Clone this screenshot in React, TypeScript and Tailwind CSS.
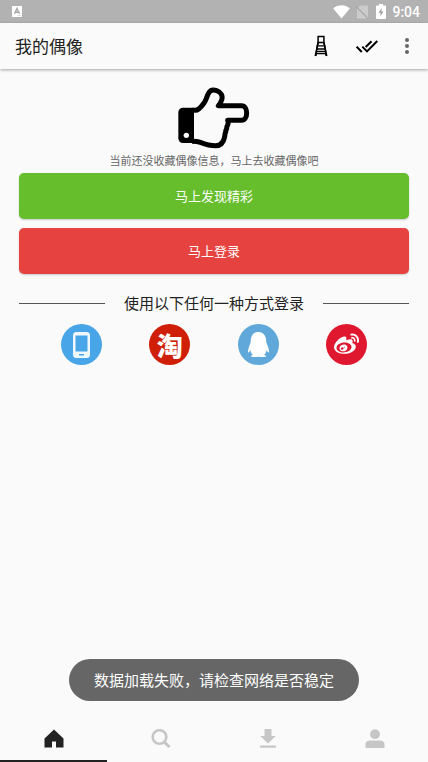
// Favourites ("我的偶像") screen: empty state, third-party sign-in and bottom tabs.
import React from "react";
import { FaQq, FaWeibo } from "react-icons/fa";

const FONT = "font-['Noto_Sans_CJK_SC',sans-serif]";

function StatusBar(): React.ReactElement {
  return (
    <div className="flex h-[23px] items-center bg-[#b2b2b2] pr-2 pl-3 text-white">
      <svg viewBox="0 0 10 11" className="h-[11px] w-[10px]" aria-hidden="true">
        <rect width="10" height="11" rx=".5" fill="#fff" />
        <path d="M2.500 7.800 5 2.500 7.500 7.800M3.400 6.200h3.200" fill="none" stroke="#a8a8a8" strokeWidth="1.400" />
        <path d="M5.500 9.600h3" stroke="#a8a8a8" strokeWidth=".5" />
      </svg>
      <span className="flex-1" />
      <svg viewBox="0 0 17 14" className="h-[14px] w-[17px]" aria-hidden="true">
        <path d="M.2 3.600C5-.8 12-.8 16.800 3.600L8.500 13.500Z" fill="#fff" />
      </svg>
      <svg viewBox="0 0 12 14" className="ml-[6px] h-[14px] w-[12px]" aria-hidden="true">
        <path d="M4 .5h7a1 1 0 0 1 1 1v12H1V4Z" fill="#cbcbcb" />
        <path d="M0 1.500 12 13.500" stroke="#a6a6a6" strokeWidth="1.200" />
      </svg>
      <svg viewBox="0 0 10 15" className="ml-2 h-[15px] w-[10px]" aria-hidden="true">
        <path d="M3 0h4v1.500h2a1 1 0 0 1 1 1V14a1 1 0 0 1-1 1H1a1 1 0 0 1-1-1V2.500a1 1 0 0 1 1-1h2Z" fill="#fff" />
        <path d="M5.800 4 2.500 8.800h2.200L4.200 12.500 7.500 7.600H5.300Z" fill="#9c9c9c" />
      </svg>
      <span className="ml-[6px] font-[Roboto,sans-serif] text-[14px] leading-none font-medium">9:04</span>
    </div>
  );
}

function AppBar(): React.ReactElement {
  return (
    <header className="z-10 flex h-[46px] items-center bg-[#fafafa] pr-1 pl-[15px] shadow-[0_1px_3px_rgba(0,0,0,0.35)]">
      <h1 className="flex-1 text-[17px] leading-6 text-[#222]">我的偶像</h1>
      <button type="button" aria-label="排行" className="grid h-full w-[46px] place-items-center">
        <svg viewBox="0 0 14 22" className="h-[22px] w-[14px]" fill="none" stroke="#000" aria-hidden="true">
          <path d="M3.500 1.600h7M4.100 1v7.500L1.200 21M9.900 1v7.500L12.800 21" strokeWidth="1.500" />
          <path d="M3.500 7.500h7M2.800 10.800h8.400M2.400 14h9.200M2 16.500h10M2 18.600h10" strokeWidth="1.300" />
          <path d="M3.800 8 2.600 14l-.6 7M10.200 8l1.200 6 .6 7" strokeWidth="1.300" />
        </svg>
      </button>
      <button type="button" aria-label="全选" className="grid h-full w-[46px] place-items-center">
        <svg viewBox="0 0 22 13" className="h-[13px] w-[22px]" fill="none" stroke="#000" strokeWidth="2" aria-hidden="true">
          <path d="M.6 6.600 5.800 12M6.300 6.600l4.700 4.800L21.300 1M9.700 7 15.500 1.200" />
        </svg>
      </button>
      <button type="button" aria-label="更多" className="grid h-full w-[34px] place-items-center">
        <svg viewBox="0 0 4 16" className="h-4 w-1" fill="#666" aria-hidden="true">
          <circle cx="2" cy="2" r="2" />
          <circle cx="2" cy="8" r="2" />
          <circle cx="2" cy="14" r="2" />
        </svg>
      </button>
    </header>
  );
}

function PointingHand(): React.ReactElement {
  return (
    <svg viewBox="54 21 216 186" className="h-[62px] w-[72px]" aria-hidden="true">
      <path d="M69 83h33v106H69a14 14 0 0 1-14-14V97a14 14 0 0 1 14-14Z" />
      <circle cx="79" cy="166" r="8" fill="#fafafa" />
      <path
        d="M98 91h8c9 0 17-9 26-22 7-9 8-20 14-30 5-9 14-11 24-7 14 5 19 16 15 28-2 6-4 11-10 17h70c9 0 15 10 15 22s-6 22-15 22h-42c2 5 2 9 0 14-3 4-3 7-3 11-3 4-3 7-3 11-3 4-2 8-3 13-3 16-11 27-27 27-16 0-33-5-46-10-8-3-17-3-25-3"
        fill="none"
        stroke="#000"
        strokeWidth="15"
        strokeLinejoin="round"
      />
    </svg>
  );
}

function PhoneGlyph(): React.ReactElement {
  return (
    <svg viewBox="0 0 17 26" className="h-[26px] w-[17px]" aria-hidden="true">
      <path
        fillRule="evenodd"
        fill="#fff"
        fillOpacity=".92"
        d="M3.500 0h10A3.500 3.500 0 0 1 17 3.500v19a3.500 3.500 0 0 1-3.500 3.500h-10A3.500 3.500 0 0 1 0 22.500v-19A3.500 3.500 0 0 1 3.500 0ZM2.500 3.500v16h12v-16ZM6 22v1.500h5V22Z"
      />
    </svg>
  );
}

const LOGINS = [
  { name: "手机登录", bg: "bg-[#48a6e8]", icon: <PhoneGlyph /> },
  { name: "淘宝登录", bg: "bg-[#cf1f08]", icon: <span className="text-[26px] leading-none font-black">淘</span> },
  { name: "QQ登录", bg: "bg-[#5fa8d9]", icon: <FaQq className="size-[25px]" /> },
  { name: "微博登录", bg: "bg-[#df182f]", icon: <FaWeibo className="size-[25px]" /> },
];

const TABS = [
  { name: "首页", active: true, icon: <path d="M10 .5 19.500 9.500V18.500h-7.500v-6H8v6H.5v-9Z" fill="#222" /> },
  {
    name: "搜索",
    active: false,
    icon: (
      <g fill="none" stroke="#c6c6c6">
        <circle cx="8.500" cy="8" r="6.800" strokeWidth="2.600" />
        <path d="m13.200 13 5.300 5" strokeWidth="3" />
      </g>
    ),
  },
  { name: "下载", active: false, icon: <path d="M6.500 0h7v7h4.300L10 14.500 2.200 7h4.300ZM2.200 16.500h15.600v2.200H2.200Z" fill="#c6c6c6" /> },
  {
    name: "我的",
    active: false,
    icon: (
      <g fill="#c6c6c6">
        <circle cx="10" cy="5.200" r="4.900" />
        <path d="M.5 19v-3.500c0-2.500 1.800-4 4.500-4h10c2.700 0 4.500 1.500 4.500 4V19Z" />
      </g>
    ),
  },
];

export default function App(): React.ReactElement {
  return (
    <div className={"flex min-h-screen flex-col bg-[#fafafa] " + FONT}>
      <StatusBar />
      <AppBar />

      <main className="flex flex-1 flex-col px-[19px] pt-[18px]">
        <div className="flex flex-col items-center">
          <PointingHand />
          <p className="pt-px pb-[3px] text-[11px] leading-5 text-[#666]">当前还没收藏偶像信息，马上去收藏偶像吧</p>
        </div>

        <div className="flex flex-col gap-[9px] text-[13px] text-white">
          <button type="button" className="h-[46px] rounded-[5px] bg-[#66be2c] shadow-[0_1px_2px_rgba(0,0,0,0.2)]">马上发现精彩</button>
          <button type="button" className="h-[46px] rounded-[5px] bg-[#e64340] shadow-[0_1px_2px_rgba(0,0,0,0.2)]">马上登录</button>
        </div>

        <div className="mt-[17px] flex items-center gap-[19px]">
          <span className="h-px flex-1 bg-[#555]" />
          <h2 className="text-[15px] leading-6 text-[#222]">使用以下任何一种方式登录</h2>
          <span className="h-px flex-1 bg-[#555]" />
        </div>

        <div className="mt-[9px] grid grid-cols-4 justify-items-center px-[18px]">
          {LOGINS.map((l) => (
            <button key={l.name} type="button" aria-label={l.name} className={"grid size-[41px] place-items-center rounded-full text-white " + l.bg}>
              {l.icon}
            </button>
          ))}
        </div>
      </main>

      <div role="status" className="fixed bottom-[61px] left-1/2 -translate-x-1/2 rounded-full bg-[#666] px-[25px] py-[9px] text-[15px] leading-6 whitespace-nowrap text-white">
        数据加载失败，请检查网络是否稳定
      </div>

      <nav className="grid h-[46px] grid-cols-4">
        {TABS.map((t) => (
          <button
            key={t.name}
            type="button"
            aria-label={t.name}
            className={"grid place-items-center border-b-2 " + (t.active ? "border-[#222]" : "border-transparent")}
          >
            <svg viewBox="0 0 20 19" className="h-[19px] w-5" aria-hidden="true">{t.icon}</svg>
          </button>
        ))}
      </nav>
    </div>
  );
}
